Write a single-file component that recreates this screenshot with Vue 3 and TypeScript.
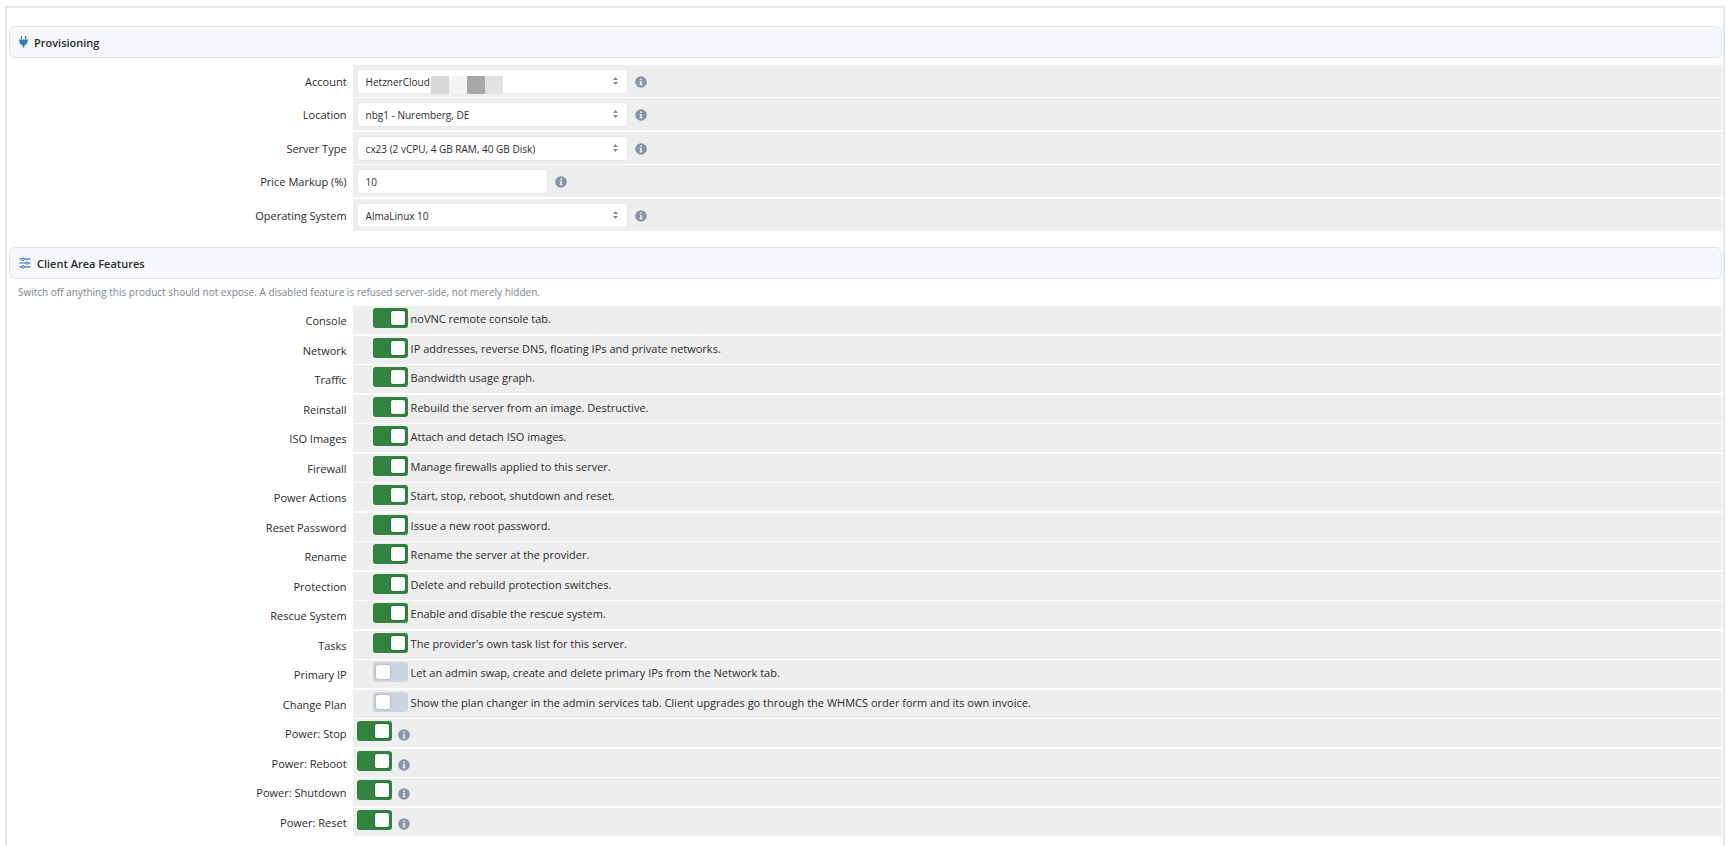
<script setup lang="ts">
import { reactive } from 'vue'

interface Field {
  id: string
  label: string
  value: string
  kind: 'select' | 'text'
  masked?: boolean
}

interface Feature {
  id: string
  label: string
  on: boolean
  note?: string
}

const fields = reactive<Field[]>([
  { id: 'account', label: 'Account', value: 'HetznerCloud', kind: 'select', masked: true },
  { id: 'location', label: 'Location', value: 'nbg1 - Nuremberg, DE', kind: 'select' },
  { id: 'server-type', label: 'Server Type', value: 'cx23 (2 vCPU, 4 GB RAM, 40 GB Disk)', kind: 'select' },
  { id: 'markup', label: 'Price Markup (%)', value: '10', kind: 'text' },
  { id: 'os', label: 'Operating System', value: 'AlmaLinux 10', kind: 'select' },
])

const features = reactive<Feature[]>([
  { id: 'console', label: 'Console', on: true, note: 'noVNC remote console tab.' },
  { id: 'network', label: 'Network', on: true, note: 'IP addresses, reverse DNS, floating IPs and private networks.' },
  { id: 'traffic', label: 'Traffic', on: true, note: 'Bandwidth usage graph.' },
  { id: 'reinstall', label: 'Reinstall', on: true, note: 'Rebuild the server from an image. Destructive.' },
  { id: 'iso', label: 'ISO Images', on: true, note: 'Attach and detach ISO images.' },
  { id: 'firewall', label: 'Firewall', on: true, note: 'Manage firewalls applied to this server.' },
  { id: 'power', label: 'Power Actions', on: true, note: 'Start, stop, reboot, shutdown and reset.' },
  { id: 'password', label: 'Reset Password', on: true, note: 'Issue a new root password.' },
  { id: 'rename', label: 'Rename', on: true, note: 'Rename the server at the provider.' },
  { id: 'protection', label: 'Protection', on: true, note: 'Delete and rebuild protection switches.' },
  { id: 'rescue', label: 'Rescue System', on: true, note: 'Enable and disable the rescue system.' },
  { id: 'tasks', label: 'Tasks', on: true, note: "The provider's own task list for this server." },
  { id: 'primary-ip', label: 'Primary IP', on: false, note: 'Let an admin swap, create and delete primary IPs from the Network tab.' },
  { id: 'plan', label: 'Change Plan', on: false, note: 'Show the plan changer in the admin services tab. Client upgrades go through the WHMCS order form and its own invoice.' },
  { id: 'p-stop', label: 'Power: Stop', on: true },
  { id: 'p-reboot', label: 'Power: Reboot', on: true },
  { id: 'p-shutdown', label: 'Power: Shutdown', on: true },
  { id: 'p-reset', label: 'Power: Reset', on: true },
])
</script>

<template>
  <main class="page">
    <div class="panel">
      <h2 class="heading">
        <svg width="9" height="12" viewBox="0 0 9 12" aria-hidden="true">
          <path d="M1.800 0h1.200v3H1.800zM6 0h1.200v3H6zM0 3.500h9v1.300h-.5v1c0 1.800-1.300 3.200-3.200 3.600V11.500H3.700V9.400C1.800 9 .5 7.600.5 5.800v-1H0z" />
        </svg>
        <span>Provisioning</span>
      </h2>
      <div class="rows fields">
        <div v-for="f in fields" :key="f.id" class="row">
          <label class="label" :for="f.id">{{ f.label }}</label>
          <div class="cell">
            <div v-if="f.kind === 'select'" class="picker">
              <select :id="f.id" v-model="f.value" class="control">
                <option :value="f.value">{{ f.value }}</option>
              </select>
              <svg class="arrows" width="5" height="8" viewBox="0 0 5 8" aria-hidden="true">
                <path d="M2.500 0 5 3H0zM0 5h5L2.500 8z" />
              </svg>
              <span v-if="f.masked" class="mask" aria-hidden="true"><i /><i /><i /><i /></span>
            </div>
            <input v-else :id="f.id" v-model="f.value" class="control short" type="text" />
            <button class="info" type="button" :aria-label="'About ' + f.label">
              <svg width="12" height="12" viewBox="0 0 12 12" aria-hidden="true">
                <circle cx="6" cy="6" r="5.800" />
                <path d="M5.200 2.600h1.700v1.500H5.200zM4.600 5h2.200v3.300h.7v1H4.500v-1h.7V6h-.6z" />
              </svg>
            </button>
          </div>
        </div>
      </div>

      <h2 class="heading second">
        <svg width="12" height="12" viewBox="0 0 12 12" aria-hidden="true">
          <path class="line" d="M.5 2.200h11M.5 6h11M.5 9.800h11" />
          <circle class="knob" cx="4" cy="2.200" r="1.300" />
          <circle class="knob" cx="8.200" cy="6" r="1.300" />
          <circle class="knob" cx="4" cy="9.800" r="1.300" />
        </svg>
        <span>Client Area Features</span>
      </h2>
      <p class="hint">Switch off anything this product should not expose. A disabled feature is refused server-side, not merely hidden.</p>
      <div class="rows features">
        <div v-for="f in features" :key="f.id" class="row">
          <label class="label" :for="f.id">{{ f.label }}</label>
          <div class="cell" :class="{ indented: f.note }">
            <input :id="f.id" v-model="f.on" class="toggle" type="checkbox" role="switch" />
            <span v-if="f.note" class="note">{{ f.note }}</span>
            <button v-else class="info" type="button" :aria-label="'About ' + f.label">
              <svg width="12" height="12" viewBox="0 0 12 12" aria-hidden="true">
                <circle cx="6" cy="6" r="5.800" />
                <path d="M5.200 2.600h1.700v1.500H5.200zM4.600 5h2.200v3.300h.7v1H4.500v-1h.7V6h-.6z" />
              </svg>
            </button>
          </div>
        </div>
      </div>
    </div>
  </main>
</template>

<style>
body {
  background: #fefefe;
}
</style>

<style scoped>
.page {
  box-sizing: border-box;
  min-height: 100vh;
  padding: 6px 0 0 5px;
  display: flex;
  font-family: 'Open Sans', 'Noto Sans', sans-serif;
  font-size: 11px;
  color: #2b2b2b;
}
.panel {
  flex: 1;
  min-width: 0;
  border: 2px solid #e2e7e9;
  border-bottom: 0;
  padding: 18px 1px 0 2px;
}
.heading {
  box-sizing: border-box;
  height: 32px;
  margin: 0;
  padding: 0 9px;
  display: flex;
  align-items: center;
  gap: 6px;
  border: 1px solid #e1e5e9;
  border-radius: 6px;
  background: #f6f7fa;
  font-size: 11px;
  font-weight: 600;
}
.heading svg {
  fill: #337ab7;
}
.heading .line {
  stroke: #337ab7;
  stroke-width: 1.2;
}
.heading .knob {
  fill: #f6f7fa;
  stroke: #337ab7;
}
.second {
  margin-top: 16px;
}
.fields {
  margin-top: 7px;
}
.hint {
  margin: 5px 9px 6px;
  font-size: 10px;
  line-height: 16px;
  color: #7d848b;
}
.row {
  display: grid;
  grid-template-columns: 20% 1fr;
  column-gap: 1px;
}
.row + .row {
  margin-top: 1px;
}
.fields .row:nth-child(odd):not(:first-child),
.features .row:nth-child(even) {
  margin-top: 2px;
}
.label {
  padding: 2px 5px 0 0;
  text-align: right;
  line-height: 30px;
}
.cell {
  display: flex;
  align-items: flex-start;
  background: #eee;
}
.fields .cell {
  padding: 4px 4px 3px;
}
.features .label {
  line-height: 26px;
}
.features .cell {
  padding: 2px 4px 4px;
}
.features .indented {
  padding-left: 20px;
}
.picker {
  position: relative;
  width: 271px;
}
.control {
  box-sizing: border-box;
  display: block;
  width: 100%;
  height: 25px;
  margin: 0;
  padding: 0 8px;
  appearance: none;
  border: 1px solid #e6e8ea;
  border-radius: 4px;
  background: #fff;
  font-family: inherit;
  font-size: 10px;
  color: #2b2b2b;
}
.short {
  width: 191px;
}
.arrows {
  position: absolute;
  top: 8px;
  right: 10px;
  fill: #85888e;
  pointer-events: none;
}
.mask {
  position: absolute;
  left: 74px;
  top: 7px;
  display: flex;
}
.mask i {
  width: 18px;
  height: 18px;
  background: #d6d8da;
}
.mask i:nth-child(2) {
  background: #f4f4f3;
}
.mask i:nth-child(3) {
  background: #a8a8a8;
}
.mask i:nth-child(4) {
  background: #e2e2e2;
}
.info {
  margin: 7px 0 0 7px;
  padding: 0;
  border: 0;
  background: none;
  line-height: 0;
}
.features .info {
  margin: 8px 0 0 6px;
}
.info svg {
  fill: #8a94a8;
}
.info path {
  fill: #eee;
}
.toggle {
  box-sizing: border-box;
  width: 35px;
  height: 20px;
  margin: 0;
  padding: 3px;
  display: flex;
  appearance: none;
  border-radius: 3px;
  background: #cfd5df;
}
.toggle::before {
  content: '';
  width: 14px;
  height: 14px;
  border-radius: 2px;
  background: #fff;
  box-shadow: 0 0 2px rgba(0, 0, 0, 0.35);
}
.toggle:checked {
  justify-content: flex-end;
  background: #31833f;
}
.note {
  margin-left: 3px;
  line-height: 22px;
}
</style>
